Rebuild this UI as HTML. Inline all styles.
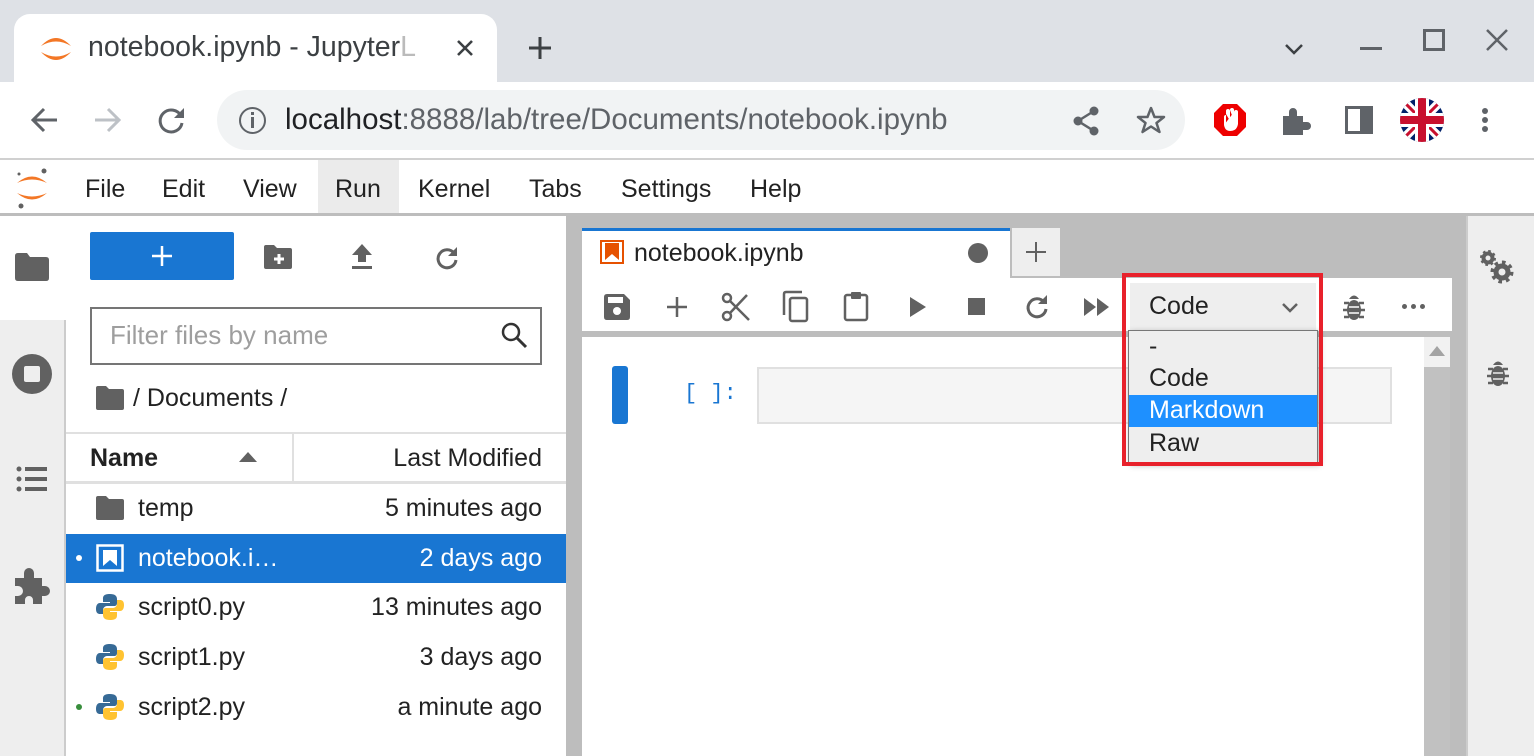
<!DOCTYPE html>
<html><head><meta charset="utf-8"><style>
*{margin:0;padding:0;box-sizing:border-box}
body{width:1534px;height:756px;overflow:hidden;position:relative;font-family:"Liberation Sans",sans-serif;background:#fff;color:#222}
.a{position:absolute}
.t{font-size:24px;white-space:nowrap}
.f{font-size:25px}
svg{position:absolute;overflow:visible}
</style></head><body>
<!-- chrome tab strip -->
<div class="a" style="left:0;top:0;width:1534px;height:82px;background:#dee1e6"></div>
<div class="a" style="left:14px;top:14px;width:483px;height:70px;background:#fff;border-radius:16px 16px 0 0"></div>
<svg style="left:38px;top:32px" width="36" height="34" viewBox="0 0 36 34"><path d="M3 14Q18 -2 33 14Q18 5 3 14Z" fill="#f37726"/><path d="M3 20Q18 36 33 20Q18 29 3 20Z" fill="#f37726"/></svg>
<div class="a t" style="left:88px;top:31px;font-size:28.5px;color:#3c4043">notebook.ipynb - Jupyter<span style="color:#bbb">L</span></div>
<div class="a" style="left:420px;top:28px;width:22px;height:40px;background:linear-gradient(90deg,rgba(255,255,255,0),#fff)"></div>
<svg style="left:456px;top:39px" width="18" height="18"><path d="M2 2L16 16M16 2L2 16" stroke="#3c4043" stroke-width="2.6"/></svg>
<svg style="left:528px;top:36px" width="24" height="24"><path d="M12 1V23M1 12H23" stroke="#3c4043" stroke-width="3"/></svg>
<svg style="left:1284px;top:42px" width="20" height="14"><path d="M2 3L10 11L18 3" stroke="#3c4043" stroke-width="2.5" fill="none"/></svg>
<div class="a" style="left:1360px;top:47px;width:22px;height:3px;background:#5f6368"></div>
<div class="a" style="left:1423px;top:29px;width:22px;height:22px;border:3px solid #5f6368"></div>
<svg style="left:1486px;top:29px" width="22" height="22"><path d="M1 1L21 21M21 1L1 21" stroke="#5f6368" stroke-width="2.5"/></svg>
<!-- address row -->
<svg style="left:30px;top:107px" width="28" height="26"><path d="M27 13H3M14 2L3 13L14 24" stroke="#5f6368" stroke-width="3" fill="none"/></svg>
<svg style="left:94px;top:107px" width="28" height="26"><path d="M1 13H25M14 2L25 13L14 24" stroke="#bdc1c6" stroke-width="3" fill="none"/></svg>
<svg style="left:158px;top:106px" width="28" height="28"><path d="M23 10A11 11 0 1 0 24 17" stroke="#5f6368" stroke-width="3" fill="none"/><path d="M26 2V12H16Z" fill="#5f6368"/></svg>
<div class="a" style="left:217px;top:90px;width:968px;height:60px;background:#f1f3f4;border-radius:30px"></div>
<div class="a" style="left:239px;top:107px;width:27px;height:27px;border:2.5px solid #5f6368;border-radius:50%"></div>
<div class="a" style="left:251px;top:112px;width:3px;height:3px;background:#5f6368"></div>
<div class="a" style="left:251px;top:117px;width:3px;height:11px;background:#5f6368"></div>
<div class="a t" style="left:285px;top:103px;font-size:29.5px;color:#202124">localhost<span style="color:#5f6368">:8888/lab/tree/Documents/notebook.ipynb</span></div>
<svg style="left:1072px;top:106px" width="28" height="30"><circle cx="22" cy="5" r="4.5" fill="#5f6368"/><circle cx="6" cy="15" r="4.5" fill="#5f6368"/><circle cx="22" cy="25" r="4.5" fill="#5f6368"/><path d="M22 5L6 15L22 25" stroke="#5f6368" stroke-width="2.5" fill="none"/></svg>
<svg style="left:1136px;top:106px" width="30" height="28"><path d="M15 2L18.5 11H28L20.5 17L23.5 26L15 20.5L6.5 26L9.5 17L2 11H11.5Z" stroke="#5f6368" stroke-width="2.5" fill="none" stroke-linejoin="round"/></svg>
<svg style="left:1213px;top:103px" width="34" height="34"><path d="M10 1H24L33 10V24L24 33H10L1 24V10Z" fill="#e00"/><path d="M11 22V14Q11 12 13 12V20M13 11V8Q13 6 15 6Q17 6 17 8V18M17 7Q17 5 19 5Q21 5 21 7V18M21 9Q21 7 23 7Q25 7 25 9V21Q24 28 17 28Q12 28 11 22" fill="#fff"/></svg>
<svg style="left:1280px;top:106px" width="30" height="30"><path d="M3 10H9V6A4 4 0 0 1 17 6V10H23V16H27A4 4 0 0 1 27 24H23V29H3Z" fill="#5f6368"/></svg>
<div class="a" style="left:1345px;top:106px;width:28px;height:28px;border:3px solid #5f6368;border-right:13px solid #5f6368"></div>
<svg style="left:1400px;top:98px" width="44" height="44" viewBox="0 0 44 44"><defs><clipPath id="c"><circle cx="22" cy="22" r="22"/></clipPath></defs><g clip-path="url(#c)"><rect width="44" height="44" fill="#012169"/><path d="M0 0L44 44M44 0L0 44" stroke="#fff" stroke-width="9"/><path d="M0 0L44 44M44 0L0 44" stroke="#c8102e" stroke-width="3"/><path d="M22 0V44M0 22H44" stroke="#fff" stroke-width="14"/><path d="M22 0V44M0 22H44" stroke="#c8102e" stroke-width="8"/></g></svg>
<div class="a" style="left:1482px;top:108px;width:6px;height:6px;border-radius:50%;background:#5f6368;box-shadow:0 9px 0 #5f6368,0 18px 0 #5f6368"></div>
<div class="a" style="left:0;top:158px;width:1534px;height:2px;background:#d0d0d0"></div>
<!-- menu bar -->
<svg style="left:14px;top:166px" width="36" height="44" viewBox="0 0 36 44"><path d="M3 17Q18 4 33 17Q18 10 3 17Z" fill="#f37726"/><path d="M3 27Q18 40 33 27Q18 34 3 27Z" fill="#f37726"/><circle cx="30" cy="5" r="2.5" fill="#616161"/><circle cx="5" cy="8" r="1.5" fill="#616161"/><circle cx="7" cy="40" r="2.5" fill="#616161"/></svg>
<div class="a" style="left:318px;top:160px;width:81px;height:54px;background:#ebebeb"></div>
<div class="a t f" style="top:175px;left:85px">File</div>
<div class="a t f" style="top:175px;left:162px">Edit</div>
<div class="a t f" style="top:175px;left:243px">View</div>
<div class="a t f" style="top:175px;left:335px">Run</div>
<div class="a t f" style="top:175px;left:418px">Kernel</div>
<div class="a t f" style="top:175px;left:529px">Tabs</div>
<div class="a t f" style="top:175px;left:621px">Settings</div>
<div class="a t f" style="top:175px;left:750px">Help</div>
<div class="a" style="left:0;top:213px;width:1534px;height:3px;background:#bdbdbd"></div>
<!-- left sidebar -->
<div class="a" style="left:0;top:320px;width:66px;height:436px;background:#eee;border-right:2px solid #ccc"></div>
<div class="a" style="left:64px;top:216px;width:2px;height:104px;background:#fff"></div>
<svg style="left:15px;top:253px" width="34" height="28"><path d="M0 3Q0 0 3 0H12L15 4H31Q34 4 34 7V25Q34 28 31 28H3Q0 28 0 25Z" fill="#616161"/></svg>
<div class="a" style="left:12px;top:354px;width:40px;height:40px;border-radius:50%;background:#616161"></div>
<div class="a" style="left:24px;top:366px;width:16px;height:16px;background:#eee;border-radius:2px"></div>
<svg style="left:16px;top:465px" width="32" height="28"><g fill="#616161"><circle cx="3" cy="4" r="2.5"/><circle cx="3" cy="14" r="2.5"/><circle cx="3" cy="24" r="2.5"/><rect x="9" y="2" width="22" height="4"/><rect x="9" y="12" width="22" height="4"/><rect x="9" y="22" width="22" height="4"/></g></svg>
<svg style="left:14px;top:566px" width="38" height="40"><path d="M1 12H10V7A5 5 0 0 1 20 7V12H28V20H31A5 5 0 0 1 31 30H28V38H19V34A4 4 0 0 0 11 34V38H1V30H4A5 5 0 0 0 4 20H1Z" fill="#616161"/></svg>
<!-- file browser -->
<div class="a" style="left:90px;top:232px;width:144px;height:48px;background:#1976d2;border-radius:2px"></div>
<svg style="left:151px;top:245px" width="22" height="22"><path d="M11 1V21M1 11H21" stroke="#fff" stroke-width="2.5"/></svg>
<svg style="left:264px;top:245px" width="28" height="24"><path d="M0 2Q0 0 2 0H10L13 3H26Q28 3 28 5V22Q28 24 26 24H2Q0 24 0 22Z" fill="#616161"/><path d="M15 9V19M10 14H20" stroke="#fff" stroke-width="3"/></svg>
<svg style="left:350px;top:244px" width="24" height="26"><path d="M12 0L22 11H16V18H8V11H2Z" fill="#616161"/><rect x="2" y="22" width="20" height="3" fill="#616161"/></svg>
<svg style="left:434px;top:245px" width="26" height="26"><path d="M20 8A9 9 0 1 0 22 15" stroke="#616161" stroke-width="3" fill="none"/><path d="M23 2V11H14Z" fill="#616161"/></svg>
<div class="a" style="left:90px;top:307px;width:452px;height:58px;border:2px solid #757575"></div>
<div class="a t" style="left:110px;top:320px;color:#9e9e9e;font-size:26px">Filter files by name</div>
<svg style="left:500px;top:321px" width="28" height="28"><circle cx="11" cy="11" r="8" stroke="#333" stroke-width="2.5" fill="none"/><path d="M17 17L26 26" stroke="#333" stroke-width="3"/></svg>
<svg style="left:96px;top:386px" width="28" height="24"><path d="M0 2Q0 0 2 0H10L13 3H26Q28 3 28 5V22Q28 24 26 24H2Q0 24 0 22Z" fill="#616161"/></svg>
<div class="a t f" style="left:133px;top:384px">/ Documents /</div>
<div class="a" style="left:66px;top:432px;width:500px;height:2px;background:#e0e0e0"></div>
<div class="a" style="left:292px;top:434px;width:2px;height:48px;background:#e0e0e0"></div>
<div class="a" style="left:66px;top:481px;width:500px;height:3px;background:#e0e0e0"></div>
<div class="a t f" style="left:90px;top:444px;font-weight:bold">Name</div>
<svg style="left:239px;top:452px" width="18" height="10"><path d="M0 10L9 0L18 10Z" fill="#616161"/></svg>
<div class="a t f" style="right:992px;top:444px">Last Modified</div>
<div class="a" style="left:66px;top:534px;width:500px;height:49px;background:#1976d2"></div>
<svg style="left:96px;top:496px" width="28" height="24"><path d="M0 2Q0 0 2 0H10L13 3H26Q28 3 28 5V22Q28 24 26 24H2Q0 24 0 22Z" fill="#616161"/></svg>
<div class="a t f" style="left:138px;top:494px">temp</div><div class="a t f" style="right:992px;top:494px">5 minutes ago</div>
<div class="a" style="left:76px;top:555px;width:6px;height:6px;border-radius:50%;background:#fff"></div>
<svg style="left:96px;top:544px" width="28" height="28"><rect x="1.5" y="1.5" width="25" height="25" stroke="#fff" stroke-width="2.5" fill="none"/><path d="M7 6H21V22L14 16L7 22Z" fill="#fff"/></svg>
<div class="a t f" style="left:138px;top:544px;color:#fff">notebook.i…</div><div class="a t f" style="right:992px;top:544px;color:#fff">2 days ago</div>
<svg style="left:96px;top:593px;width:28px;height:28px" viewBox="0 0 28 28"><path d="M14 1C7 1 7 4 7 6V9H14V10H4C1 10 0 13 0 16C0 20 2 21 4 21H7V17C7 15 9 13 11 13H18C20 13 21 12 21 10V6C21 3 19 1 14 1Z" fill="#366a96"/><path d="M14 27C21 27 21 24 21 22V19H14V18H24C27 18 28 15 28 12C28 8 26 7 24 7H21V11C21 13 19 15 17 15H10C8 15 7 16 7 18V22C7 25 9 27 14 27Z" fill="#ffc331"/></svg>
<div class="a t f" style="left:138px;top:593px">script0.py</div><div class="a t f" style="right:992px;top:593px">13 minutes ago</div>
<svg style="left:96px;top:643px;width:28px;height:28px" viewBox="0 0 28 28"><path d="M14 1C7 1 7 4 7 6V9H14V10H4C1 10 0 13 0 16C0 20 2 21 4 21H7V17C7 15 9 13 11 13H18C20 13 21 12 21 10V6C21 3 19 1 14 1Z" fill="#366a96"/><path d="M14 27C21 27 21 24 21 22V19H14V18H24C27 18 28 15 28 12C28 8 26 7 24 7H21V11C21 13 19 15 17 15H10C8 15 7 16 7 18V22C7 25 9 27 14 27Z" fill="#ffc331"/></svg>
<div class="a t f" style="left:138px;top:643px">script1.py</div><div class="a t f" style="right:992px;top:643px">3 days ago</div>
<div class="a" style="left:76px;top:704px;width:6px;height:6px;border-radius:50%;background:#388e3c"></div>
<svg style="left:96px;top:693px;width:28px;height:28px" viewBox="0 0 28 28"><path d="M14 1C7 1 7 4 7 6V9H14V10H4C1 10 0 13 0 16C0 20 2 21 4 21H7V17C7 15 9 13 11 13H18C20 13 21 12 21 10V6C21 3 19 1 14 1Z" fill="#366a96"/><path d="M14 27C21 27 21 24 21 22V19H14V18H24C27 18 28 15 28 12C28 8 26 7 24 7H21V11C21 13 19 15 17 15H10C8 15 7 16 7 18V22C7 25 9 27 14 27Z" fill="#ffc331"/></svg>
<div class="a t f" style="left:138px;top:693px">script2.py</div><div class="a t f" style="right:992px;top:693px">a minute ago</div>
<!-- main area -->
<div class="a" style="left:566px;top:216px;width:900px;height:540px;background:#bdbdbd"></div>
<div class="a" style="left:582px;top:228px;width:428px;height:50px;background:#fff;border-top:3px solid #1976d2"></div>
<svg style="left:600px;top:240px" width="24" height="24"><rect x="1" y="1" width="22" height="22" stroke="#e65100" stroke-width="2" fill="#fff"/><path d="M5 3H19V20L12 14L5 20Z" fill="#e65100"/></svg>
<div class="a t f" style="left:634px;top:239px">notebook.ipynb</div>
<div class="a" style="left:968px;top:243px;width:20px;height:20px;border-radius:50%;background:#616161"></div>
<div class="a" style="left:1012px;top:228px;width:48px;height:48px;background:#eee"></div>
<svg style="left:1025px;top:241px" width="22" height="22"><path d="M11 1V21M1 11H21" stroke="#616161" stroke-width="2"/></svg>
<div class="a" style="left:582px;top:278px;width:870px;height:56px;background:#fff;border-bottom:3px solid #bdbdbd"></div>
<div class="a" style="left:582px;top:337px;width:842px;height:419px;background:#fff"></div>
<div class="a" style="left:1424px;top:337px;width:26px;height:419px;background:#c1c1c1"></div>
<div class="a" style="left:1424px;top:337px;width:26px;height:30px;background:#f1f1f1"></div>
<svg style="left:1429px;top:346px" width="16" height="10"><path d="M0 10L8 0L16 10Z" fill="#a3a3a3"/></svg>
<!-- toolbar icons -->
<svg style="left:604px;top:294px" width="26" height="26"><path d="M0 3Q0 0 3 0H20L26 6V23Q26 26 23 26H3Q0 26 0 23Z" fill="#616161"/><rect x="4" y="3" width="15" height="6" fill="#fff"/><circle cx="13" cy="17" r="4" fill="#fff"/></svg>
<svg style="left:666px;top:296px" width="22" height="22"><path d="M11 1V21M1 11H21" stroke="#616161" stroke-width="2.5"/></svg>
<svg style="left:722px;top:292px" width="28" height="30"><circle cx="5" cy="6" r="4" stroke="#616161" stroke-width="2.5" fill="none"/><circle cx="5" cy="24" r="4" stroke="#616161" stroke-width="2.5" fill="none"/><path d="M8 9L27 28M8 21L25 3" stroke="#616161" stroke-width="2.5"/></svg>
<svg style="left:782px;top:291px" width="28" height="32"><path d="M2 24V3Q2 1 4 1H20" stroke="#616161" stroke-width="2.5" fill="none"/><rect x="8" y="7" width="17" height="23" rx="2" stroke="#616161" stroke-width="2.5" fill="none"/></svg>
<svg style="left:843px;top:290px" width="26" height="32"><rect x="2" y="5" width="22" height="25" rx="2" stroke="#616161" stroke-width="2.5" fill="none"/><rect x="8" y="2" width="10" height="7" rx="1" fill="#616161"/></svg>
<svg style="left:910px;top:297px" width="16" height="20"><path d="M0 0L16 10L0 20Z" fill="#616161"/></svg>
<div class="a" style="left:968px;top:298px;width:17px;height:17px;background:#616161"></div>
<svg style="left:1024px;top:293px" width="26" height="28"><path d="M20 9A9 9 0 1 0 22 16" stroke="#616161" stroke-width="3" fill="none"/><path d="M23 2V11H14Z" fill="#616161"/></svg>
<svg style="left:1084px;top:298px" width="26" height="18"><path d="M0 0L12 9L0 18ZM13 0L25 9L13 18Z" fill="#616161"/></svg>
<svg style="left:1341px;top:292px" width="26" height="30"><path d="M8 7Q13 0 18 7Z" fill="#616161"/><path d="M3 11H8M18 11H23M2 18H8M18 18H24M3 25H8M18 25H23" stroke="#616161" stroke-width="2.5"/><ellipse cx="13" cy="18" rx="7" ry="10" fill="#616161"/><path d="M8 15H18M8 21H18" stroke="#fff" stroke-width="1.5"/></svg>
<div class="a" style="left:1402px;top:304px;width:5px;height:5px;border-radius:50%;background:#616161;box-shadow:9px 0 0 #616161,18px 0 0 #616161"></div>
<!-- cell -->
<div class="a" style="left:612px;top:366px;width:16px;height:58px;background:#1976d2;border-radius:3px"></div>
<div class="a t" style="left:684px;top:381px;font-family:'Liberation Mono',monospace;color:#1976d2;font-size:22px">[ ]:</div>
<div class="a" style="left:757px;top:367px;width:635px;height:57px;background:#f5f5f5;border:2px solid #e0e0e0"></div>
<!-- dropdown -->
<div class="a" style="left:1130px;top:283px;width:186px;height:48px;background:#eee"></div>
<div class="a t f" style="left:1149px;top:292px">Code</div>
<svg style="left:1281px;top:302px" width="18" height="12"><path d="M2 2L9 9L16 2" stroke="#616161" stroke-width="2.5" fill="none"/></svg>
<div class="a" style="left:1128px;top:330px;width:190px;height:133px;background:#eee;border:1px solid #777;box-shadow:2px 2px 6px rgba(0,0,0,.3)"></div>
<div class="a t f" style="left:1149px;top:332px">-</div>
<div class="a t f" style="left:1149px;top:364px">Code</div>
<div class="a" style="left:1129px;top:395px;width:188px;height:32px;background:#1e90ff"></div>
<div class="a t f" style="left:1149px;top:396px;color:#fff">Markdown</div>
<div class="a t f" style="left:1149px;top:429px">Raw</div>
<div class="a" style="left:1122px;top:273px;width:201px;height:193px;border:4px solid #e8212b"></div>
<!-- right sidebar -->
<div class="a" style="left:1466px;top:216px;width:68px;height:540px;background:#eee;border-left:2px solid #ccc"></div>
<svg style="left:1480px;top:250px" width="36" height="36"><circle cx="8" cy="8" r="4.5" stroke="#616161" stroke-width="4" fill="none"/><circle cx="8" cy="8" r="6.5" stroke="#616161" stroke-width="3" fill="none" stroke-dasharray="2.5 2.6"/><circle cx="22" cy="22" r="6" stroke="#616161" stroke-width="5" fill="none"/><circle cx="22" cy="22" r="9.5" stroke="#616161" stroke-width="4" fill="none" stroke-dasharray="3.5 3.9"/></svg>
<svg style="left:1485px;top:358px" width="26" height="32"><path d="M8 7Q13 0 18 7Z" fill="#616161"/><path d="M3 11H8M18 11H23M2 18H8M18 18H24M3 25H8M18 25H23" stroke="#616161" stroke-width="2.5"/><ellipse cx="13" cy="18" rx="7" ry="10" fill="#616161"/><path d="M8 15H18M8 21H18" stroke="#eee" stroke-width="1.5"/></svg>
</body></html>
